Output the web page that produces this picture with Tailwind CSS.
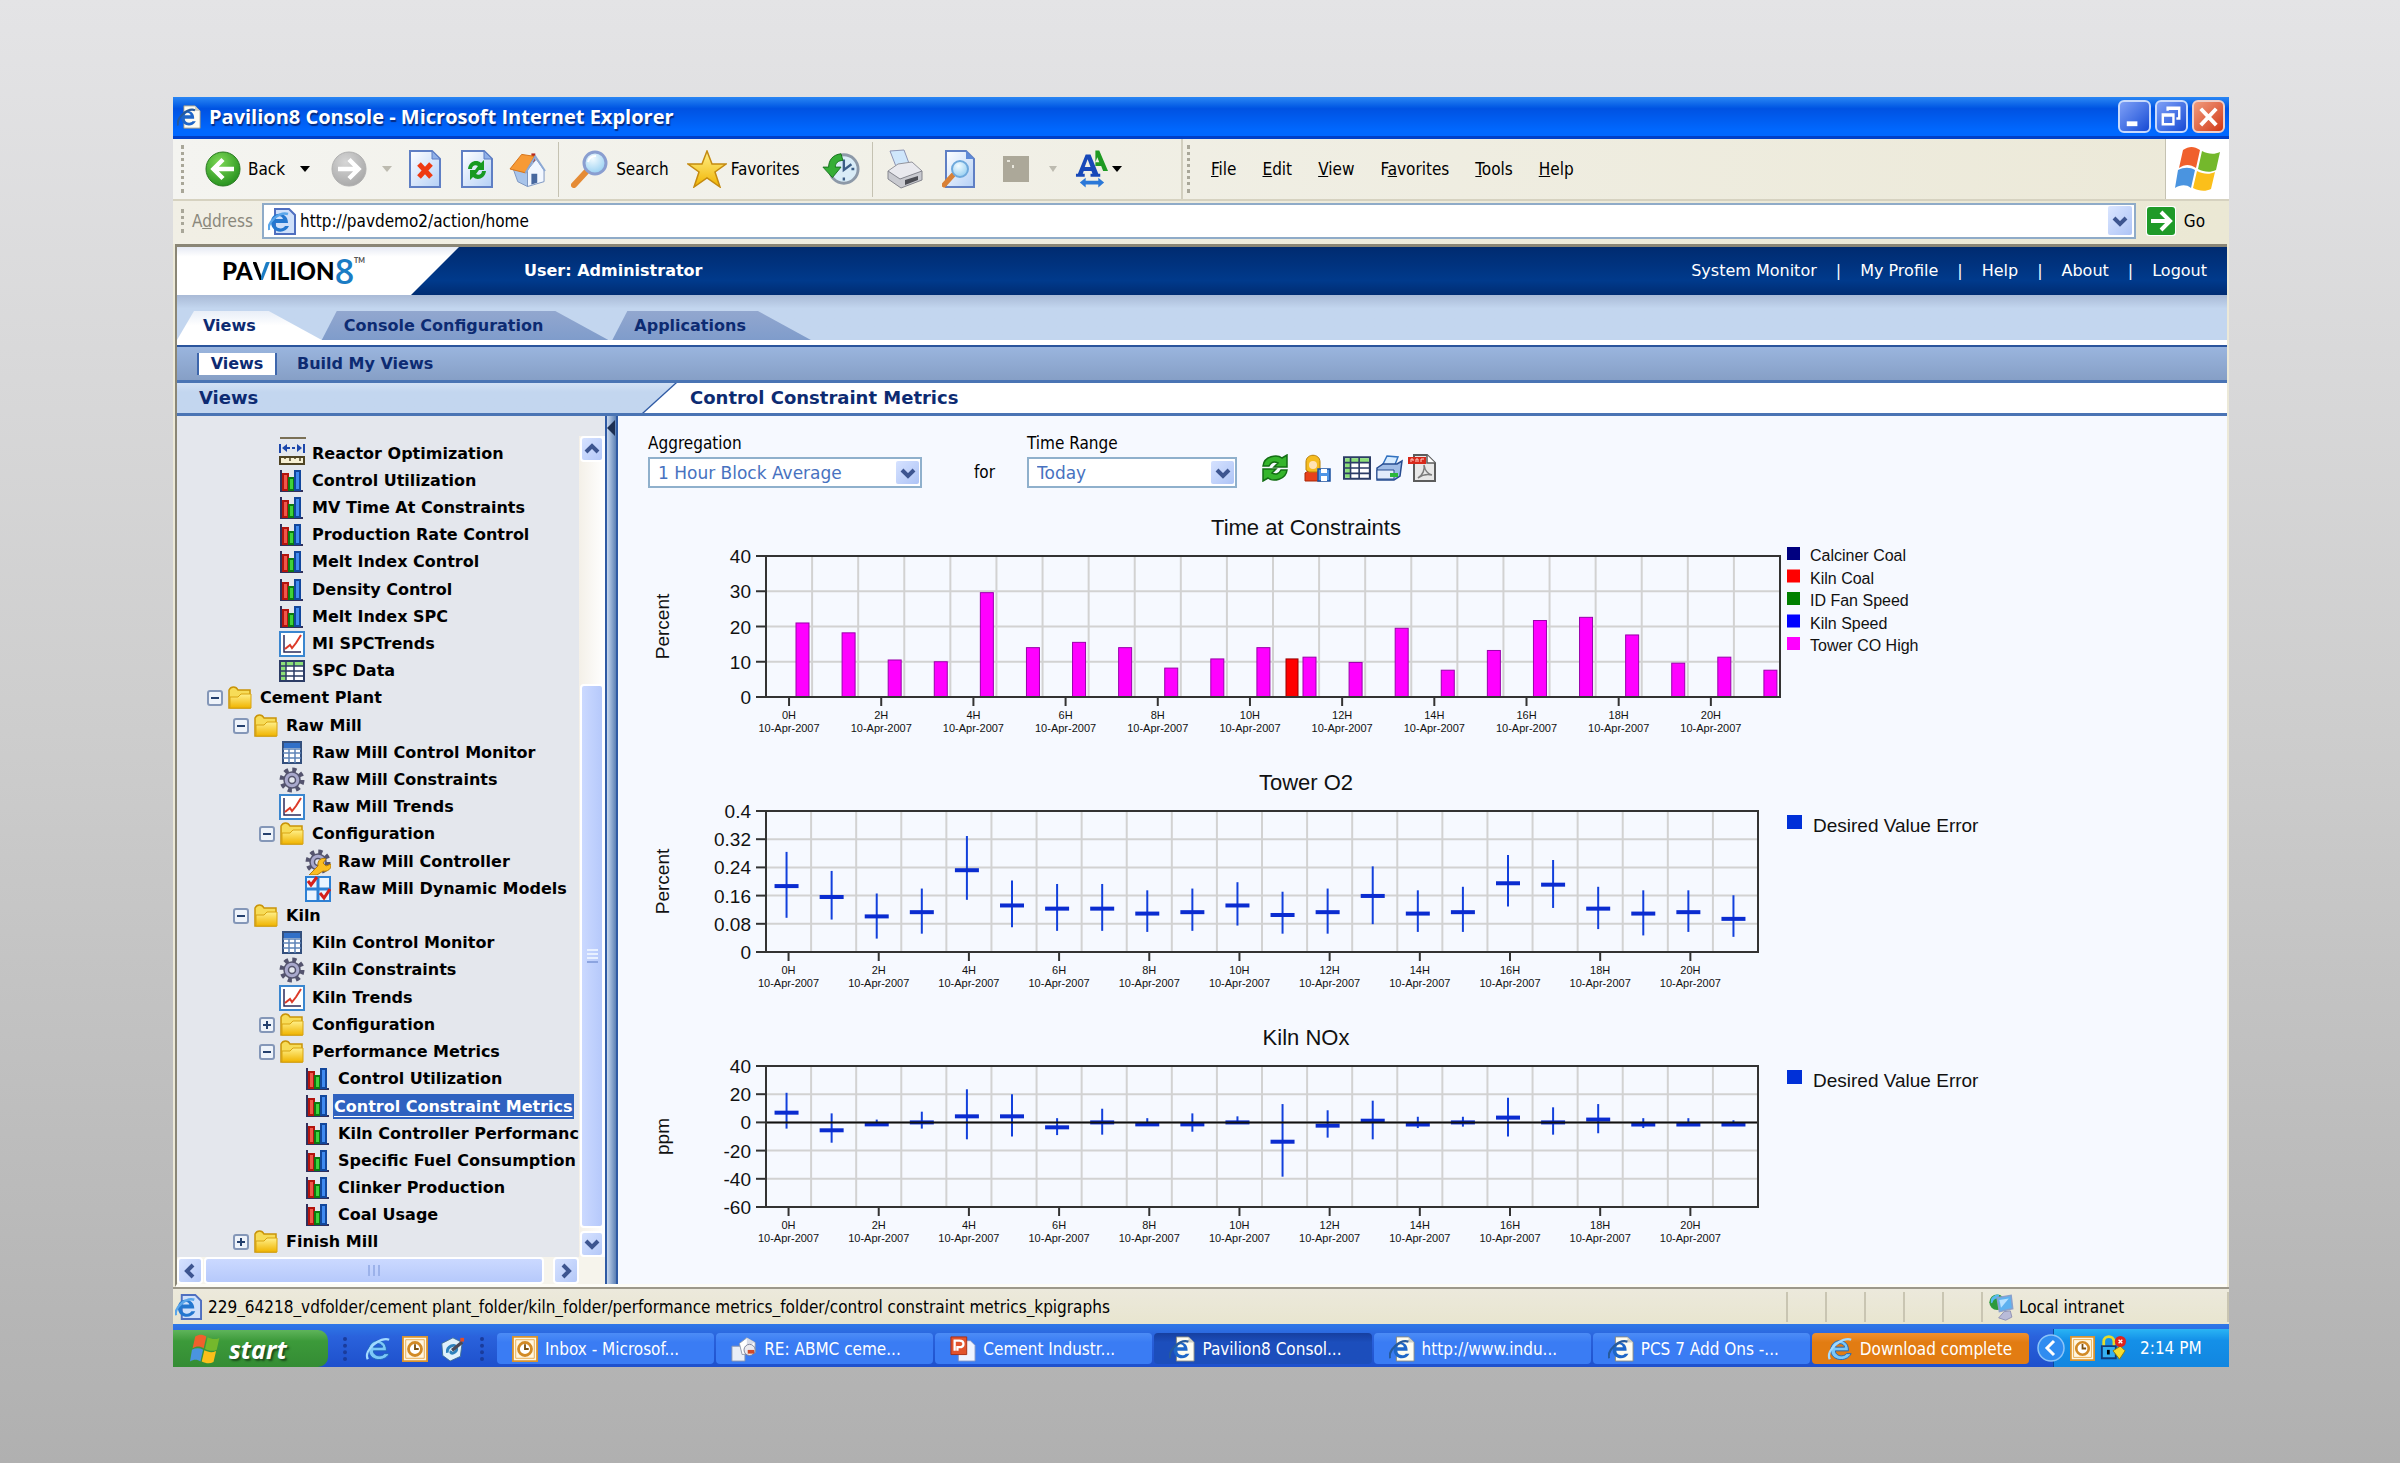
<!DOCTYPE html>
<html lang="en">
    <head>
        <meta charset="utf-8" />
        <title>Pavilion8 Console</title>
        <script src="https://cdn.jsdelivr.net/npm/@tailwindcss/browser@4"></script>
    </head>
    <body class="min-h-screen flex bg-linear-to-b from-[#e4e4e6] via-[#cdcdcd] to-[#b0b0b0] pt-[97px] pb-24 pl-[173px] pr-[171px] font-['DejaVu_Sans_Condensed','Liberation_Sans',sans-serif] text-[17px] leading-5 text-black">

    <!-- Icon sprite -->
    <svg class="absolute size-0">
      <defs>
        <linearGradient id="gDoc" x1="0" y1="0" x2="1" y2="1"><stop offset="0" stop-color="#fff" /><stop offset="1" stop-color="#b4d0f6" /></linearGradient>
        <linearGradient id="gGold" x1="0" y1="0" x2="0" y2="1"><stop offset="0" stop-color="#fff08a" /><stop offset="1" stop-color="#f0b400" /></linearGradient>
        <radialGradient id="gGreen" cx=".4" cy=".3" r=".8"><stop offset="0" stop-color="#7ed957" /><stop offset="1" stop-color="#1d8a18" /></radialGradient>
        <radialGradient id="gGrey" cx=".4" cy=".3" r=".8"><stop offset="0" stop-color="#d6d6d6" /><stop offset="1" stop-color="#a4a4a4" /></radialGradient>
        <radialGradient id="gSky" cx=".4" cy=".3" r=".8"><stop offset="0" stop-color="#f2fbff" /><stop offset="1" stop-color="#8ccaf0" /></radialGradient>
      </defs>

      <symbol id="back" viewBox="0 0 36 36"><circle cx="18" cy="18" r="17" fill="url(#gGreen)" stroke="#2a7a22" /><path d="M29 18H9M18 8.500 8.500 18 18 27.500" fill="none" stroke="#fff" stroke-width="4.500" /></symbol>
      <symbol id="forward" viewBox="0 0 36 36"><circle cx="18" cy="18" r="17" fill="url(#gGrey)" stroke="#b0b0b0" /><path d="M7 18h20M18 8.500 27.500 18 18 27.500" fill="none" stroke="#fff" stroke-width="4.500" /></symbol>
      <symbol id="stop" viewBox="0 0 32 38"><path d="M1 1h22l8 8v28H1z" fill="url(#gDoc)" stroke="#5f7fc4" stroke-width="2" /><path d="M23 1v8h8z" fill="#8fb0e8" stroke="#5f7fc4" /><path d="m10 14 12 13M22 14 10 27" stroke="#ef3a12" stroke-width="5" /></symbol>
      <symbol id="reload" viewBox="0 0 32 38"><path d="M1 1h22l8 8v28H1z" fill="url(#gDoc)" stroke="#5f7fc4" stroke-width="2" /><path d="M23 1v8h8z" fill="#8fb0e8" stroke="#5f7fc4" /><path d="M7 19c1-8 9-10 13-6l3-3v10h-9l3-4c-3-2-6 0-6 3zM25 21c-1 8-9 10-13 6l-3 3V20h9l-3 4c3 2 6 0 6-3z" fill="#179a22" /></symbol>
      <symbol id="homeIcon" viewBox="0 0 38 38"><path d="M23 3h4v9h-4z" fill="#b8281a" /><path d="M4 18 9 32l10 5V17z" fill="#a8c4ea" stroke="#7b95c0" /><path d="m19 20 9-11 8 11v12l-17 5z" fill="#f2f7ff" stroke="#7b95c0" /><path d="M1 19 13 4l13 2-9 17z" fill="#f79a35" stroke="#d57218" /><path d="m17 23 10-17 10 15" fill="none" stroke="#8da9d4" stroke-width="2" /><path d="M23 24h6v9l-6 2z" fill="#47689f" /></symbol>
      <symbol id="search" viewBox="0 0 38 38"><path d="m3 35 12-13" stroke="#e58b35" stroke-width="6" stroke-linecap="round" /><circle cx="24" cy="13" r="11" fill="url(#gSky)" stroke="#8a9ed0" stroke-width="3" /><path d="M17 12c1-4 4-6 8-6" fill="none" stroke="#fff" stroke-width="2" /></symbol>
      <symbol id="star" viewBox="0 0 40 38"><path d="m20 1 5 13h14L28 22l5 15-13-9-13 9 5-15L1 14h14z" fill="url(#gGold)" stroke="#c48a10" stroke-width="1.500" /></symbol>
      <symbol id="history" viewBox="0 0 40 38"><circle cx="23" cy="19" r="15" fill="#d9ecf7" stroke="#8d99a8" stroke-width="3" /><path d="M23 9v11l8-6M23 31v-3M34 19h-3" fill="none" stroke="#3c5d86" stroke-width="2.500" /><path d="M20 3C11 4 7 10 7 17H1l10 11 9-11h-6c0-4 3-7 8-7z" fill="#35ae36" stroke="#16701c" /></symbol>
      <symbol id="printer" viewBox="0 0 38 40"><path d="m4 2 14-1 6 16-13 3z" fill="#cfe6fb" stroke="#8c93b4" /><path d="m2 22 10-7 14-2 10 9-10 6-13 4z" fill="#e9e9ee" stroke="#93949c" /><path d="M2 22v8l13 9 21-8v-9l-22 8z" fill="#c9cad0" stroke="#85868e" /><path d="m19 31 13-4v4l-13 5z" fill="#4c4d54" /></symbol>
      <symbol id="preview" viewBox="0 0 34 38"><path d="M4 1h20l8 8v28H4z" fill="url(#gDoc)" stroke="#5f7fc4" stroke-width="2" /><path d="M24 1v8h8z" fill="#5f8ad8" /><path d="m2 35 9-10" stroke="#d98136" stroke-width="5" stroke-linecap="round" /><circle cx="18" cy="19" r="8" fill="url(#gSky)" stroke="#6fa9dc" stroke-width="2" /></symbol>
      <symbol id="fontSize" viewBox="0 0 34 40"><path d="M21 1h4l9 21h-5l-2-5h-6zM21 13h4l-2-5z" fill="#1e9a22" /><path d="M11 5h5l8 20h2v3H16v-3h2l-1-3H9l-1 3h2v3H1v-3h2zM10 18h6l-3-8z" fill="#1748b8" /><path d="m5 34 6-5v3h13v-3l6 5-6 5v-3H11v3z" fill="#2b78d8" /></symbol>
      <symbol id="flag" viewBox="0 0 48 46"><path d="M9 4c6-4 11-4 17 0l-4 18c-6-4-11-4-17 0z" fill="#f0602c" /><path d="M28 5c6 3 12 4 18 1l-4 18c-6 3-12 2-18-1z" fill="#74b82c" /><path d="M4 24c6-3 12-3 17 0l-4 18c-5-4-11-3-16 0z" fill="#4a94e0" /><path d="M23 25c6 3 12 4 18 1l-4 17c-6 3-12 2-18-1z" fill="#fbbf1a" /></symbol>
      <symbol id="ie" viewBox="0 0 28 28"><path d="M23 16H9c0 6 9 7 12 3h5c-5 10-22 8-22-4C4 2 24 1 23 16zM19 12c-1-5-9-5-10 0z" fill="#7cc8f8" stroke="#1c65b8" /><path d="M3 25C-2 15 17 0 26 4" fill="none" stroke="#a4daff" stroke-width="2.500" /></symbol>
      <symbol id="iePage" viewBox="0 0 28 28"><path d="M8 1h13l6 6v20H8z" fill="#fdfcf2" stroke="#8a8a80" /><path d="M21 1v6h6z" fill="#cfcfc4" /><path d="M20 16H9c0 5 7 6 9 3h4c-4 8-17 6-17-4 0-11 16-11 15 1zM16 12c-1-4-6-4-7 0z" fill="#1e66c8" /><path d="M1 24C-1 15 12 3 21 6" fill="none" stroke="#265a9c" stroke-width="2.500" /></symbol>
      <symbol id="ieBlue" viewBox="0 0 28 28"><path d="M7 2h14l6 6v19H7z" fill="#cfe0fa" stroke="#4f6fc0" stroke-width="2" /><path d="M19 16H7c0 6 8 7 10 3h4c-4 9-18 7-18-4C3 4 20 4 20 16zM15 12c-1-4-7-4-8 0z" fill="#2477cf" /><path d="M1 23C-1 15 12 4 20 7" fill="none" stroke="#5aa6ea" stroke-width="2.500" /></symbol>
      <symbol id="clock" viewBox="0 0 28 28"><path d="M1 1h26v26H1z" fill="#fff6e0" stroke="#d9932e" stroke-width="2" /><path d="M4 4h20v20H4z" fill="none" stroke="#e8ac50" /><circle cx="14" cy="14" r="7" fill="#fff" stroke="#d28a26" stroke-width="3" /><path d="M14 9v5h4" fill="none" stroke="#7b5010" stroke-width="2" /></symbol>
      <symbol id="mail" viewBox="0 0 28 28"><path d="M1 11h10l4 4v12H1z" fill="#e9eef7" stroke="#8a94ac" /><path d="m9 8 8-6 9 5v11l-14 2z" fill="#fff" stroke="#8f97aa" /><path d="M17 2v9l9-4" fill="#d8dce8" /><circle cx="20" cy="15" r="6" fill="#eaeaf0" stroke="#7b8299" /><path d="M18 15h7v4h-7z" fill="#d04a28" /></symbol>
      <symbol id="slides" viewBox="0 0 28 28"><path d="M9 5h13l5 5v17H9z" fill="#eef3ff" stroke="#8294c4" /><path d="M1 1h17v19H1z" fill="#e2532d" stroke="#a62c12" /><path d="M5 16V5h5c6 0 6 7 0 7H8v4" fill="none" stroke="#fff" stroke-width="2.500" /></symbol>
      <symbol id="desktop" viewBox="0 0 28 28"><path d="m3 8 12-6 10 5-2 15-11 5-8-6z" fill="#dff1fb" stroke="#3f6f94" /><path d="M9 18c-1-7 9-11 10-5 1 5-8 8-6 3" fill="none" stroke="#2d82bd" stroke-width="3" /><path d="m13 14 11-9 2 3-11 9z" fill="#4a4a58" /><path d="M23 2h4v4h-4z" fill="#e24d28" /></symbol>
      <symbol id="intranet" viewBox="0 0 32 36"><circle cx="11" cy="12" r="10" fill="#2d9a3c" /><path d="M3 8c4-6 8-6 10-6 2 3-2 5-5 6s-2 6-5 5z" fill="#56b9ee" /><path d="M11 6 29 3l2 17-17 4z" fill="#5fb2f0" stroke="#8aa0cc" stroke-width="2" /><path d="m14 9 12-2-10 12z" fill="#b9e2ff" /><path d="m20 24 8-1 2 8-8 4-9-3z" fill="#b9bbd8" stroke="#8486ac" /></symbol>
      <symbol id="lock" viewBox="0 0 28 28"><path d="M4 12V7c0-7 11-7 11 0v5" fill="none" stroke="#e4dc2c" stroke-width="3" /><path d="M2 12h15v13H2z" fill="#35b0f2" stroke="#0f3b7c" stroke-width="2" /><path d="M9 16v5" stroke="#000" stroke-width="3" /><path d="m14 17 8-5 5 5-6 9z" fill="#f5dc2e" stroke="#8c7a0a" /><circle cx="22" cy="7" r="6" fill="#e0221c" /><path d="m20 5 4 4m0-4-4 4" stroke="#fff" stroke-width="1.500" /></symbol>

      <symbol id="bars" viewBox="0 0 26 26"><path d="M2 2v21h22" fill="none" stroke="#30305c" stroke-width="2" /><path d="M4 6h5v16H4z" fill="#f0564a" stroke="#b3140e" stroke-width="2" /><path d="M10 10h5v12h-5z" fill="#3fd23a" stroke="#0b7a12" stroke-width="2" /><path d="M16 3h5v19h-5z" fill="#3f8af0" stroke="#12479c" stroke-width="2" /></symbol>
      <symbol id="trend" viewBox="0 0 26 26"><path d="M1 1h24v24H1z" fill="#fff" stroke="#3a86cf" stroke-width="2" /><path d="M5 4v17h17" fill="none" stroke="#2c2c5c" stroke-width="1.500" /><path d="m6 18 5-4 2 3 4-5 5-8" fill="none" stroke="#dc3a28" stroke-width="2" /></symbol>
      <symbol id="table" viewBox="0 0 26 26"><path d="M1 3h24v20H1z" fill="#fff" stroke="#2c3c66" stroke-width="2" /><path d="M2 4h22v4H2zM2 8h5v14H2z" fill="#8ce078" /><path d="M1 8h24M1 13h24M1 18h24M7 3v20M15 3v20" stroke="#2c3c66" stroke-width="1.500" /></symbol>
      <symbol id="optim" viewBox="0 0 26 26"><path d="M1 3v9M25 3v9" stroke="#1c47ac" stroke-width="2" /><path d="m3 7 5-4v8zM23 7l-5-4v8z" fill="#1c47ac" /><path d="M8 7h11" stroke="#1c47ac" stroke-width="2" stroke-dasharray="3 2" /><path d="M1 16h24v7H1z" fill="#f7f0d4" stroke="#4e4322" stroke-width="2" /><path d="M6 15v3M11 15v5M16 15v3M21 15v5" stroke="#4e4322" stroke-width="1.500" /></symbol>
      <symbol id="monitor" viewBox="0 0 26 26"><path d="M4 2h18v21H4z" fill="#fff" stroke="#34507e" stroke-width="2" /><path d="M5 3h16v5H5z" fill="#3170c8" /><path d="M4 9h18M4 13h18M4 18h18M10 9v14M16 9v14" stroke="#5e84b8" stroke-width="1.500" /></symbol>
      <symbol id="gear" viewBox="0 0 26 26"><circle cx="13" cy="13" r="10" fill="none" stroke="#54546e" stroke-width="5" stroke-dasharray="4 3.850" /><circle cx="13" cy="13" r="8" fill="#a8a8cc" stroke="#54546e" stroke-width="1.500" /><circle cx="13" cy="13" r="3.500" fill="#e4e7ed" stroke="#54546e" stroke-width="1.500" /></symbol>
      <symbol id="wrench" viewBox="0 0 26 26"><use href="#gear" width="26" height="26" /><path d="m4 26 9-9c-1-6 4-9 8-7l-3 4 3 3 5-2c1 5-4 8-8 7l-6 4z" fill="#fbbe22" stroke="#b57c08" /></symbol>
      <symbol id="models" viewBox="0 0 26 26"><path d="M1 1h24v24H1z" fill="#eaf4ff" stroke="#2c80d4" stroke-width="2" /><path d="M13 1v24M1 13h24" stroke="#2c80d4" stroke-width="3" /><path d="m3 5 3 4 6-8M15 17l4 5 6-9" fill="none" stroke="#d4201c" stroke-width="3" /></symbol>
      <symbol id="folder" viewBox="0 0 26 26"><path d="M2 5c2-4 7-4 9 0h12v18H2z" fill="#f7dc58" stroke="#c99408" stroke-width="1.500" /><path d="M3 12h8l3-3h10v14H3z" fill="url(#gGold)" stroke="#d8a410" /></symbol>
      <symbol id="refresh" viewBox="0 0 28 28"><path d="M2 12C3 2 16 0 21 4l5-3v12H13l4-4c-4-2-7-1-9 3zM26 16c-1 10-14 12-19 8l-5 3V15h13l-4 4c4 2 7 1 9-3z" fill="#35b52c" stroke="#136e14" stroke-width="1.500" /></symbol>
      <symbol id="person" viewBox="0 0 28 28"><path d="M2 27V19l5-3h7l4 3v8z" fill="#e8411a" stroke="#a82808" /><path d="M3 16V8c0-9 14-9 14 0v8l-3 2H6z" fill="#f6bc20" stroke="#b88008" /><circle cx="10" cy="11" r="4" fill="#ffe2b4" /><path d="M15 15h12v12H15z" fill="#4f96e6" stroke="#1c52a0" stroke-width="1.500" /><path d="M18 15h6v4h-6zM18 22h6v5h-6z" fill="#fff" /></symbol>
      <symbol id="printBlue" viewBox="0 0 28 28"><path d="m12 2 11 1-4 10-12-1z" fill="#d8ecff" stroke="#3272c0" stroke-width="1.500" /><path d="m2 14 6-4h14l5-3-2 15-6 4H2z" fill="#9fbce6" stroke="#274c90" stroke-width="1.500" /><path d="M2 16h17v9H2z" fill="#e2ecfb" stroke="#274c90" /><path d="M15 19h8v4h-8z" fill="#2cb83a" /></symbol>
      <symbol id="pdf" viewBox="0 0 28 28"><path d="M6 1h13l8 8v18H6z" fill="#e8e8e8" stroke="#5c5c5c" stroke-width="2" /><path d="M19 1v8h8" fill="#fff" stroke="#5c5c5c" stroke-width="1.500" /><path d="M10 24c5-3 7-9 6-13 1 6 4 9 8 10-4-1-10 0-14 3z" fill="none" stroke="#7c7c7c" stroke-width="1.500" /><path d="M0 3h18v7H0z" fill="#d8281a" /><path d="M3 8V5h2v2M8 8V5h2v3M13 8V5h3" fill="none" stroke="#ffd0c8" /></symbol>
      <symbol id="chev" viewBox="0 0 16 16"><path d="m2 5 6 6 6-6" fill="none" stroke="#3d5590" stroke-width="4" /></symbol>
    </svg>

    <div class="flex-1 flex flex-col min-w-0 bg-[#ece9d8]">

      <!-- Title bar -->
      <header class="h-[42px] shrink-0 flex items-center gap-2 pl-1 pr-1 bg-linear-to-b from-[#2a86f4] via-[#0052e2] via-30% to-[#0068ff] to-85% border-b-3 border-[#0040c8] text-white">
        <svg class="size-6"><use href="#iePage" /></svg>
        <h1 class="flex-1 font-['Open_Sans',sans-serif] font-bold text-[20px] [text-shadow:1px_2px_1px_#062a80]">Pavilion8 Console - Microsoft Internet Explorer</h1>
        <div class="flex gap-1">
          <button aria-label="Minimize" class="size-[33px] rounded-md border-2 border-[#c8dafc] bg-linear-to-br from-[#7f9ff6] to-[#1648d4]"><svg class="size-full" viewBox="0 0 30 30"><path d="M7 20h11v5H7z" fill="#fff" /></svg></button>
          <button aria-label="Restore" class="size-[33px] rounded-md border-2 border-[#c8dafc] bg-linear-to-br from-[#7f9ff6] to-[#1648d4]"><svg class="size-full" viewBox="0 0 30 30" fill="none" stroke="#fff" stroke-width="2.500"><path d="M6 13h11v10H6zM6 14h11M11 9V6h12v11h-3M11 7h12" /></svg></button>
          <button aria-label="Close" class="size-[33px] rounded-md border-2 border-[#f0cfc8] bg-linear-to-br from-[#f09a7c] to-[#d0340c]"><svg class="size-full" viewBox="0 0 30 30"><path d="m7 7 16 17M23 7 7 24" stroke="#fff" stroke-width="4" /></svg></button>
        </div>
      </header>

      <!-- Toolbar -->
      <div class="h-[62px] shrink-0 flex items-stretch bg-linear-to-r from-[#f4f4f0] to-[#ece9d8] border-b-2 border-[#d6d2c0]">
        <div class="w-[1010px] flex items-center border-r-2 border-[#d2cfbf] pl-2">
          <span class="h-12 border-l-3 border-dotted border-[#a9a799] mr-[21px]"></span>
          <button class="flex items-center gap-[7px]"><svg class="size-9"><use href="#back" /></svg>Back</button>
          <svg class="w-[10px] h-[6px] ml-[15px]"><path d="M0 0h10L5 6z" /></svg>
          <button aria-label="Forward" class="ml-[21px]"><svg class="size-9"><use href="#forward" /></svg></button>
          <svg class="w-[10px] h-[6px] ml-[15px]"><path d="M0 0h10L5 6z" fill="#bdbbb0" /></svg>
          <button aria-label="Stop" class="ml-[17px]"><svg class="w-8 h-[38px]"><use href="#stop" /></svg></button>
          <button aria-label="Refresh" class="ml-5"><svg class="w-8 h-[38px]"><use href="#reload" /></svg></button>
          <button aria-label="Home" class="ml-4"><svg class="w-[37px] h-[38px]"><use href="#homeIcon" /></svg></button>
          <span class="h-[55px] w-px bg-[#c5c2b2] ml-3 mr-3"></span>
          <button class="flex items-center gap-[7px]"><svg class="size-[38px]"><use href="#search" /></svg>Search</button>
          <button class="flex items-center gap-1 ml-[18px]"><svg class="w-10 h-[38px]"><use href="#star" /></svg>Favorites</button>
          <button aria-label="History" class="ml-[22px]"><svg class="w-[38px] h-[38px]"><use href="#history" /></svg></button>
          <span class="h-[55px] w-px bg-[#c5c2b2] ml-3 mr-[13px]"></span>
          <button aria-label="Print"><svg class="w-[38px] h-10"><use href="#printer" /></svg></button>
          <button aria-label="Print preview" class="ml-[18px]"><svg class="w-[34px] h-[38px]"><use href="#preview" /></svg></button>
          <span class="w-[26px] h-[26px] ml-[27px] bg-[#aca899] p-1"><svg class="size-2" viewBox="0 0 8 8"><path d="M0 0h3v2H0zM5 5h2v3H5z" fill="#e8e6dc" /></svg></span>
          <svg class="w-[8px] h-[6px] ml-5"><path d="M0 0h8L4 6z" fill="#bdbbb0" /></svg>
          <button aria-label="Text size" class="ml-[18px]"><svg class="w-[33px] h-10"><use href="#fontSize" /></svg></button>
          <svg class="w-[10px] h-[6px] ml-1"><path d="M0 0h10L5 6z" /></svg>
        </div>
        <nav class="flex-1 flex items-center pl-1">
          <span class="h-12 border-l-3 border-dotted border-[#a9a799] mr-[21px]"></span>
          <div class="flex gap-[26px]">
            <a href="#"><u>F</u>ile</a>
            <a href="#"><u>E</u>dit</a>
            <a href="#"><u>V</u>iew</a>
            <a href="#">F<u>a</u>vorites</a>
            <a href="#"><u>T</u>ools</a>
            <a href="#"><u>H</u>elp</a>
          </div>
        </nav>
        <div class="w-16 flex items-center justify-center bg-white border-l border-[#c5c2b2]"><svg class="w-12 h-[46px]"><use href="#flag" /></svg></div>
      </div>

      <!-- Address bar -->
      <form class="h-[43px] shrink-0 flex items-center pl-2 pb-1 bg-linear-to-r from-[#f1efe5] to-[#ebe8d4]">
        <span class="h-6 border-l-3 border-dotted border-[#a9a799] mr-2"></span>
        <label for="address" class="w-[70px] text-[#8a887c]">A<u>d</u>dress</label>
        <div class="flex-1 h-9 flex items-center gap-1 pl-1 pr-[2px] bg-white border-2 border-[#8fabc8]">
          <svg class="size-7"><use href="#ieBlue" /></svg>
          <input id="address" type="text" value="http://pavdemo2/action/home" class="flex-1 outline-none" />
          <button type="button" aria-label="Show history" class="w-6 h-[29px] flex items-center justify-center rounded-xs bg-linear-to-br from-[#dbe6ff] to-[#aec4f6]"><svg class="size-4"><use href="#chev" /></svg></button>
        </div>
        <button type="button" class="flex items-center gap-2 ml-[10px] mr-6"><svg class="size-[30px]" viewBox="0 0 30 30"><rect width="30" height="30" rx="3" fill="#fff" /><rect x="1" y="1" width="28" height="28" rx="3" fill="#1f9a28" /><path d="M5 15h18M15 6l9 9-9 9" fill="none" stroke="#fff" stroke-width="4" /></svg>Go</button>
      </form>

      <!-- Page -->
      <main class="flex-1 flex flex-col min-h-0 ml-[2px] mr-[2px] border-t-3 border-l-2 border-[#8a8676] border-b-3 border-b-[#fdfcf6] bg-[#f6f9ff] font-['DejaVu_Sans','Liberation_Sans',sans-serif] text-[16px]">
        <div class="h-[48px] shrink-0 flex items-center bg-linear-to-b from-[#002b70] via-[#003a8c] via-70% to-[#002c72] text-white">
          <div class="w-[282px] h-full flex items-center pl-[45px] bg-linear-to-b from-[#e6eaf4] to-white to-20% [clip-path:polygon(0_0,100%_0,calc(100%-48px)_100%,0_100%)] font-['Lato',sans-serif] font-black text-[24px] text-black">
            <span>PA</span><span class="bg-linear-to-r from-black from-50% to-[#1b7cc4] to-50% bg-clip-text text-transparent">V</span><span>ILION</span><span class="font-['Open_Sans',sans-serif] text-[34px] font-semibold text-[#1b7cc4]">8</span><sup class="text-[7px] -mt-4 text-[#555]">TM</sup>
          </div>
          <p class="ml-[65px] flex-1 font-bold">User: Administrator</p>
          <nav class="flex gap-[19px] pr-5">
            <a href="#">System Monitor</a><span>|</span>
            <a href="#">My Profile</a><span>|</span>
            <a href="#">Help</a><span>|</span>
            <a href="#">About</a><span>|</span>
            <a href="#">Logout</a>
          </nav>
        </div>

        <nav class="h-[50px] shrink-0 flex items-end border-b-5 border-white bg-linear-to-b from-[#a9bad6] to-[#c3d6ef] to-30% font-bold text-[#0d2b72]">
          <a href="#" class="h-[29px] flex items-center pl-[26px] pr-[66px] bg-linear-to-b from-[#e8eef8] to-white to-50% [clip-path:polygon(17px_0,calc(100%-53px)_0,100%_100%,0_100%)]">Views</a>
          <a href="#" class="h-[29px] flex items-center pl-[22px] pr-[65px] mr-1 bg-linear-to-b from-[#92a7cf] to-[#7f9ccb] [clip-path:polygon(15px_0,calc(100%-53px)_0,100%_100%,0_100%)]">Console Configuration</a>
          <a href="#" class="h-[29px] flex items-center pl-[22px] pr-[65px] bg-linear-to-b from-[#92a7cf] to-[#7f9ccb] [clip-path:polygon(15px_0,calc(100%-53px)_0,100%_100%,0_100%)]">Applications</a>
        </nav>

        <nav class="h-[38px] shrink-0 flex items-center gap-5 pl-5 border-t-2 border-b-3 border-t-[#2a549c] border-b-[#4a74b4] bg-linear-to-b from-[#9ab5de] to-[#869fc6] font-bold text-[#0d2b72]">
          <a href="#" class="w-20 h-[22px] flex items-center justify-center bg-white border-x-2 border-[#3d66ac]">Views</a>
          <a href="#">Build My Views</a>
        </nav>

        <div class="h-[33px] shrink-0 flex bg-white border-b-3 border-[#4a74b4] font-bold text-[18px] text-[#0d2b72]">
          <div class="w-[500px] flex bg-[#2f5aa4] [clip-path:polygon(0_0,100%_0,calc(100%-33px)_100%,0_100%)]">
            <h2 class="w-[498px] flex items-center pl-[22px] bg-linear-to-b from-[#d3e1f5] to-[#c3d6ef] to-30% [clip-path:polygon(0_0,100%_0,calc(100%-33px)_100%,0_100%)]">Views</h2>
          </div>
          <h2 class="flex items-center pl-[13px]">Control Constraint Metrics</h2>
        </div>

        <div class="flex-1 flex min-h-0">
          <!-- Sidebar -->
          <aside class="w-[428px] shrink-0 flex flex-col bg-[#e4e7ed]">
            <div class="flex-1 flex min-h-0 pt-5">
              <div id="tree" class="flex-1 min-w-0 flex flex-col overflow-hidden font-bold pb-px">
                <span class="w-[26px] h-[2px] shrink-0 ml-[103px] mt-px mb-px bg-[#7a7056]"></span>
              </div>
              <div class="w-[26px] flex flex-col items-center gap-[3px] bg-linear-to-r from-[#f4f0e8] to-white px-px">
                <button aria-label="Scroll up" class="w-full h-[26px] flex items-center justify-center rounded-sm border-2 border-white bg-linear-to-br from-[#d6e2ff] to-[#b4c8f8]"><svg class="size-4 rotate-180"><use href="#chev" /></svg></button>
                <span class="flex-2"></span>
                <div class="w-full flex-5 flex flex-col items-center justify-center gap-[2px] rounded-sm border-2 border-white bg-linear-to-r from-[#cbd9ff] to-[#b6c9fb]"><span class="w-[11px] h-[2px] bg-[#e8f0ff]"></span><span class="w-[11px] h-[2px] bg-[#e8f0ff]"></span><span class="w-[11px] h-[2px] bg-[#e8f0ff]"></span><span class="w-[11px] h-[2px] bg-[#8ca4e0]"></span></div>
                <button aria-label="Scroll down" class="w-full h-[26px] flex items-center justify-center rounded-sm border-2 border-white bg-linear-to-br from-[#d6e2ff] to-[#b4c8f8]"><svg class="size-4"><use href="#chev" /></svg></button>
              </div>
            </div>
            <div class="h-[27px] shrink-0 flex gap-px pr-[26px] bg-[#f6f4ec]">
              <button aria-label="Scroll left" class="w-[26px] flex items-center justify-center rounded-sm border-2 border-white bg-linear-to-br from-[#d6e2ff] to-[#b4c8f8]"><svg class="size-4 rotate-90"><use href="#chev" /></svg></button>
              <div class="flex-1 flex items-center justify-center gap-[3px] rounded-sm border-2 border-white bg-linear-to-b from-[#cbd9ff] to-[#b6c9fb]"><span class="w-[2px] h-[11px] bg-[#9cb2ea]"></span><span class="w-[2px] h-[11px] bg-[#9cb2ea]"></span><span class="w-[2px] h-[11px] bg-[#9cb2ea]"></span></div>
              <button aria-label="Scroll right" class="w-[26px] ml-2 flex items-center justify-center rounded-sm border-2 border-white bg-linear-to-br from-[#d6e2ff] to-[#b4c8f8]"><svg class="size-4 -rotate-90"><use href="#chev" /></svg></button>
            </div>
          </aside>
          <button aria-label="Collapse sidebar" class="w-[13px] shrink-0 flex items-start border-x-2 border-[#2f5aa4] bg-linear-to-r from-[#c8d8ee] to-[#5c80b4]"><svg class="w-[9px] h-4 mt-1"><path d="M8 0v16L0 8z" fill="#1d2f52" /></svg></button>

          <!-- Report -->
          <section class="flex-1 min-w-0 pl-[22px]">
            <form class="h-[92px] flex items-end gap-0 pl-2 pb-5 font-['DejaVu_Sans_Condensed','Liberation_Sans',sans-serif] text-[17px]">
              <div class="w-[274px]">
                <label for="agg">Aggregation</label>
                <div class="relative mt-1">
                  <select id="agg" class="appearance-none w-full h-[31px] pl-2 bg-white border-2 border-[#8fb0cc] text-[#4872c0] font-['DejaVu_Sans',sans-serif] text-[17px]"><option>1 Hour Block Average</option></select>
                  <span class="pointer-events-none absolute right-[3px] top-[4px] w-[23px] h-[23px] flex items-center justify-center rounded-xs bg-linear-to-br from-[#d6e2ff] to-[#aec4f6]"><svg class="size-4"><use href="#chev" /></svg></span>
                </div>
              </div>
              <span class="w-[105px] pl-5 pb-[6px] text-center">for</span>
              <div class="w-[210px]">
                <label for="range">Time Range</label>
                <div class="relative mt-1">
                  <select id="range" class="appearance-none w-full h-[31px] pl-2 bg-white border-2 border-[#8fb0cc] text-[#4872c0] font-['DejaVu_Sans',sans-serif] text-[17px]"><option>Today</option></select>
                  <span class="pointer-events-none absolute right-[3px] top-[4px] w-[23px] h-[23px] flex items-center justify-center rounded-xs bg-linear-to-br from-[#d6e2ff] to-[#aec4f6]"><svg class="size-4"><use href="#chev" /></svg></span>
                </div>
              </div>
              <div class="flex items-center ml-6 pb-[6px]">
                <button type="button" aria-label="Refresh data"><svg class="size-7"><use href="#refresh" /></svg></button>
                <button type="button" aria-label="Save for user" class="ml-[14px]"><svg class="size-7"><use href="#person" /></svg></button>
                <button type="button" aria-label="Table view" class="ml-3"><svg class="size-7"><use href="#table" /></svg></button>
                <button type="button" aria-label="Print report" class="ml-1"><svg class="size-7"><use href="#printBlue" /></svg></button>
                <button type="button" aria-label="Export PDF" class="ml-[5px]"><svg class="size-7"><use href="#pdf" /></svg></button>
              </div>
            </form>
            <div id="charts" class="flex flex-col"></div>
          </section>
        </div>
      </main>

      <!-- Status bar -->
      <div class="h-[37px] shrink-0 flex items-center gap-[6px] pl-[2px] border-t-2 border-[#9c988a] bg-linear-to-b from-[#ece9dc] to-[#e8e5cf]">
        <svg class="size-[27px]"><use href="#ieBlue" /></svg>
        <p class="flex-1 truncate">229_64218_vdfolder/cement plant_folder/kiln_folder/performance metrics_folder/control constraint metrics_kpigraphs</p>
        <div class="flex h-[30px] items-center border-l-2 border-[#c9c5b2]">
          <span class="w-[39px] h-full border-r-2 border-[#c9c5b2]"></span>
          <span class="w-[39px] h-full border-r-2 border-[#c9c5b2]"></span>
          <span class="w-[39px] h-full border-r-2 border-[#c9c5b2]"></span>
          <span class="w-[39px] h-full border-r-2 border-[#c9c5b2]"></span>
          <span class="w-[39px] h-full border-r-2 border-[#c9c5b2]"></span>
          <span class="w-[246px] h-full flex items-center gap-1 pl-1 border-r-2 border-[#c9c5b2]"><svg class="size-7"><use href="#intranet" /></svg>Local intranet</span>
        </div>
      </div>

      <!-- Taskbar -->
      <footer class="h-[43px] shrink-0 flex items-stretch bg-linear-to-b from-[#2f78e8] via-[#2a62dc] via-30% to-[#1e50cc] text-white">
        <button class="w-[155px] mt-[6px] flex items-center gap-2 pl-4 rounded-r-[10px] bg-linear-to-b from-[#5eb45a] via-[#3c9a3a] via-30% to-[#348c34] font-['Open_Sans',sans-serif] font-bold italic text-[25px] [text-shadow:2px_2px_2px_#1c4c1c]"><svg class="w-8 h-[30px]"><use href="#flag" /></svg>start</button>
        <div class="w-[169px] flex items-center gap-[11px] pl-[15px] pt-[6px]">
          <span class="h-6 mr-[7px] border-l-4 border-dotted border-[#1a3c9c]"></span>
          <button aria-label="Internet Explorer"><svg class="size-[26px]"><use href="#ie" /></svg></button>
          <button aria-label="Outlook"><svg class="size-[26px]"><use href="#clock" /></svg></button>
          <button aria-label="Show desktop"><svg class="size-[26px]"><use href="#desktop" /></svg></button>
          <span class="h-6 ml-1 border-l-4 border-dotted border-[#1a3c9c]"></span>
        </div>
        <div class="flex-1 grid grid-cols-7 gap-[2px] pt-[9px] pb-[3px]">
          <button class="flex items-center gap-[7px] pl-[15px] rounded-sm bg-linear-to-b from-[#4c8cf6] to-[#3a7cf4] to-30%"><svg class="size-[26px]"><use href="#clock" /></svg>Inbox - Microsof...</button>
          <button class="flex items-center gap-[7px] pl-[15px] rounded-sm bg-linear-to-b from-[#4c8cf6] to-[#3a7cf4] to-30%"><svg class="size-[26px]"><use href="#mail" /></svg>RE: ABMC ceme...</button>
          <button class="flex items-center gap-[7px] pl-[15px] rounded-sm bg-linear-to-b from-[#4c8cf6] to-[#3a7cf4] to-30%"><svg class="size-[26px]"><use href="#slides" /></svg>Cement Industr...</button>
          <button class="flex items-center gap-[7px] pl-[15px] pt-px rounded-sm bg-linear-to-b from-[#163fa0] to-[#1c4ebc] to-30%"><svg class="size-[26px]"><use href="#iePage" /></svg>Pavilion8 Consol...</button>
          <button class="flex items-center gap-[7px] pl-[15px] rounded-sm bg-linear-to-b from-[#4c8cf6] to-[#3a7cf4] to-30%"><svg class="size-[26px]"><use href="#iePage" /></svg>http://www.indu...</button>
          <button class="flex items-center gap-[7px] pl-[15px] rounded-sm bg-linear-to-b from-[#4c8cf6] to-[#3a7cf4] to-30%"><svg class="size-[26px]"><use href="#iePage" /></svg>PCS 7 Add Ons -...</button>
          <button class="flex items-center gap-[7px] pl-[15px] rounded-sm bg-linear-to-b from-[#f0902c] to-[#e27c12] to-30%"><svg class="size-[26px]"><use href="#ie" /></svg>Download complete</button>
        </div>
        <div class="w-[200px] flex items-stretch pl-6 pt-[5px]">
          <div class="flex-1 flex items-center gap-[5px] border-l border-[#0c4a9c] bg-linear-to-b from-[#2ab4f4] via-[#1490e8] via-30% to-[#1286e0]">
            <button aria-label="Show hidden icons" class="-ml-[17px]"><svg class="size-7" viewBox="0 0 28 28"><circle cx="14" cy="14" r="13" fill="#2f8cf0" stroke="#8cc4f8" stroke-width="1.500" /><path d="m17 7-7 7 7 7" fill="none" stroke="#fff" stroke-width="3" /></svg></button>
            <svg class="size-[25px]"><use href="#clock" /></svg>
            <svg class="size-[26px]"><use href="#lock" /></svg>
            <time class="ml-[9px]">2:14 PM</time>
          </div>
        </div>
      </footer>
    </div>

    <script>
        // [level, icon, label, expander]
        const rows = [
            [2, 'optim', 'Reactor Optimization'],
            [2, 'bars', 'Control Utilization'],
            [2, 'bars', 'MV Time At Constraints'],
            [2, 'bars', 'Production Rate Control'],
            [2, 'bars', 'Melt Index Control'],
            [2, 'bars', 'Density Control'],
            [2, 'bars', 'Melt Index SPC'],
            [2, 'trend', 'MI SPCTrends'],
            [2, 'table', 'SPC Data'],
            [0, 'folder', 'Cement Plant', '-'],
            [1, 'folder', 'Raw Mill', '-'],
            [2, 'monitor', 'Raw Mill Control Monitor'],
            [2, 'gear', 'Raw Mill Constraints'],
            [2, 'trend', 'Raw Mill Trends'],
            [2, 'folder', 'Configuration', '-'],
            [3, 'wrench', 'Raw Mill Controller'],
            [3, 'models', 'Raw Mill Dynamic Models'],
            [1, 'folder', 'Kiln', '-'],
            [2, 'monitor', 'Kiln Control Monitor'],
            [2, 'gear', 'Kiln Constraints'],
            [2, 'trend', 'Kiln Trends'],
            [2, 'folder', 'Configuration', '+'],
            [2, 'folder', 'Performance Metrics', '-'],
            [3, 'bars', 'Control Utilization'],
            [3, 'bars', 'Control Constraint Metrics'],
            [3, 'bars', 'Kiln Controller Performanc'],
            [3, 'bars', 'Specific Fuel Consumption'],
            [3, 'bars', 'Clinker Production'],
            [3, 'bars', 'Coal Usage'],
            [1, 'folder', 'Finish Mill', '+'],
        ]
        const indent = ['pl-[30px]', 'pl-[56px]', 'pl-[82px]', 'pl-[108px]']
        const tree = document.getElementById('tree')
        for (const [level, icon, label, exp] of rows) {
            const box = exp
                ? `<button aria-label="Toggle ${label}" class="size-4 mr-1 shrink-0"><svg class="size-4" viewBox="0 0 16 16"><rect x="1" y="1" width="14" height="14" rx="2" fill="#eef3fa" stroke="#8497b8" stroke-width="2" /><path d="${exp === '+' ? 'M4 8h8M8 4v8' : 'M4 8h8'}" stroke="#24406e" stroke-width="2" /></svg></button>`
                : '<span class="w-5 shrink-0"></span>'
            const cls = label === 'Control Constraint Metrics' ? 'ml-[2px] px-px h-[25px] leading-[25px] bg-[#2f62c0] text-white underline underline-offset-4' : 'ml-[7px]'
            tree.insertAdjacentHTML('beforeend',
                `<div class="flex-1 flex items-center whitespace-nowrap ${indent[level]}">${box}<svg class="size-[26px] shrink-0"><use href="#${icon}" /></svg><a href="#" class="${cls}">${label}</a></div>`)
        }

        const hours = 22
        const plotX = 126, plotY = 48, plotH = 141

        function frame(c) {
            const slot = c.width / hours
            const y = v => plotY + (c.max - v) / (c.max - c.min) * plotH
            let s = `<text x="666" y="27" text-anchor="middle" class="text-[22px]">${c.title}</text>`
            s += `<text transform="translate(29 ${plotY + plotH / 2}) rotate(-90)" text-anchor="middle" class="text-[19px]">${c.unit}</text>`
            for (let k = 1; k < hours; k++) s += `<path d="M${plotX + k * slot} ${plotY}v${plotH}" stroke="#d2d2d2" stroke-width="2" />`
            for (const v of c.ticks) {
                if (v !== c.min && v !== c.max) s += `<path d="M${plotX} ${y(v)}h${c.width}" stroke="#d2d2d2" stroke-width="2" />`
                s += `<path d="M${plotX - 10} ${y(v)}h10" stroke="#333" stroke-width="2" />`
                s += `<text x="${plotX - 15}" y="${y(v) + 7}" text-anchor="end" class="text-[19px]">${v}</text>`
            }
            for (let k = 0; k < hours - 1; k += 2) {
                const x = plotX + (k + 0.5) * slot
                s += `<path d="M${x} ${plotY + plotH}v9" stroke="#333" stroke-width="2" />`
                s += `<text x="${x}" y="${plotY + plotH + 22}" text-anchor="middle" class="text-[11px]">${k}H</text>`
                s += `<text x="${x}" y="${plotY + plotH + 35}" text-anchor="middle" class="text-[11px]">10-Apr-2007</text>`
            }
            return { s, slot, y }
        }

        function border(c) {
            return `<rect x="${plotX}" y="${plotY}" width="${c.width}" height="${plotH}" fill="none" stroke="#333" stroke-width="2" />`
        }

        function draw(body, title) {
            document.getElementById('charts').insertAdjacentHTML('beforeend',
                `<svg role="img" aria-label="${title}" class="w-[1380px] h-[255px] font-['Liberation_Sans',sans-serif] fill-[#111]" viewBox="0 0 1380 255">${body}</svg>`)
        }

        function barChart(c) {
            const { s, slot, y } = frame(c)
            let out = s
            c.bars.forEach((v, k) => {
                out += `<rect x="${plotX + k * slot + 30}" y="${y(v)}" width="13" height="${y(0) - y(v)}" fill="#f0f" stroke="#90a" />`
            })
            out += `<rect x="${plotX + 11 * slot + 13}" y="${y(10.8)}" width="12" height="${y(0) - y(10.8)}" fill="#f00" stroke="#900" />`
            out += border(c)
            c.legend.forEach(([name, color], i) => {
                out += `<rect x="1147" y="${39 + i * 22.5}" width="13" height="13" fill="${color}" /><text x="1170" y="${53 + i * 22.5}" class="text-[16px]">${name}</text>`
            })
            draw(out, c.title)
        }

        function errorChart(c) {
            const { s, slot, y } = frame(c)
            let out = s
            c.points.forEach(([mid, hi, lo], k) => {
                const x = plotX + (k + 0.5) * slot - 2
                out += `<path d="M${x} ${y(hi)}V${y(lo)}" stroke="#1240dc" stroke-width="2" /><rect x="${x - 12}" y="${y(mid) - 2}" width="24" height="4" fill="#0a2cd0" />`
            })
            if (c.min < 0) out += `<path d="M${plotX} ${y(0)}h${c.width}" stroke="#111" stroke-width="2" />`
            out += border(c)
            out += '<rect x="1147" y="52" width="15" height="14" fill="#0030d8" /><text x="1173" y="69" class="text-[19px]">Desired Value Error</text>'
            draw(out, c.title)
        }

        barChart({
            title: 'Time at Constraints', unit: 'Percent', width: 1014, min: 0, max: 40, ticks: [0, 10, 20, 30, 40],
            bars: [21, 18.2, 10.5, 10, 29.6, 14, 15.5, 14, 8.2, 10.8, 14, 11.3, 9.8, 19.5, 7.6, 13.2, 21.7, 22.6, 17.6, 9.6, 11.3, 7.6],
            legend: [['Calciner Coal', '#000080'], ['Kiln Coal', '#ff0000'], ['ID Fan Speed', '#008000'], ['Kiln Speed', '#0000ff'], ['Tower CO High', '#ff00ff']],
        })
        errorChart({
            title: 'Tower O2', unit: 'Percent', width: 992, min: 0, max: 0.4, ticks: [0, 0.08, 0.16, 0.24, 0.32, 0.4],
            points: [
                [.187, .284, .097], [.156, .23, .092], [.101, .166, .038], [.113, .18, .052], [.232, .329, .148], [.132, .203, .07],
                [.123, .193, .06], [.123, .193, .06], [.109, .175, .057], [.113, .18, .06], [.132, .198, .075], [.105, .171, .052],
                [.113, .18, .052], [.159, .243, .079], [.109, .175, .057], [.113, .185, .057], [.195, .275, .129], [.191, .261, .125],
                [.123, .185, .065], [.109, .175, .047], [.113, .175, .057], [.094, .161, .043],
            ],
        })
        errorChart({
            title: 'Kiln NOx', unit: 'ppm', width: 992, min: -60, max: 40, ticks: [-60, -40, -20, 0, 20, 40],
            points: [
                [6.9, 21, -4.4], [-5.6, 6.4, -14.4], [-1.4, 2, -2.5], [0, 7.6, -4.4], [4.3, 23.5, -12], [4.3, 20, -10],
                [-3.5, 3, -9], [0, 9.7, -8.7], [-1.4, 3, -2.5], [-1.4, 6.4, -6.6], [0, 4.3, -1], [-13.7, 13, -38.5],
                [-2.3, 8.6, -10.8], [1.2, 15.4, -12], [-1.5, 4, -4], [0, 4, -3], [3.4, 17.5, -10], [0, 10.7, -8.7],
                [2, 13, -7.7], [-1.5, 3, -4], [-1.5, 3, -2.5], [-1.5, 1.5, -2.5],
            ],
        })
    </script>
    </body>
</html>
